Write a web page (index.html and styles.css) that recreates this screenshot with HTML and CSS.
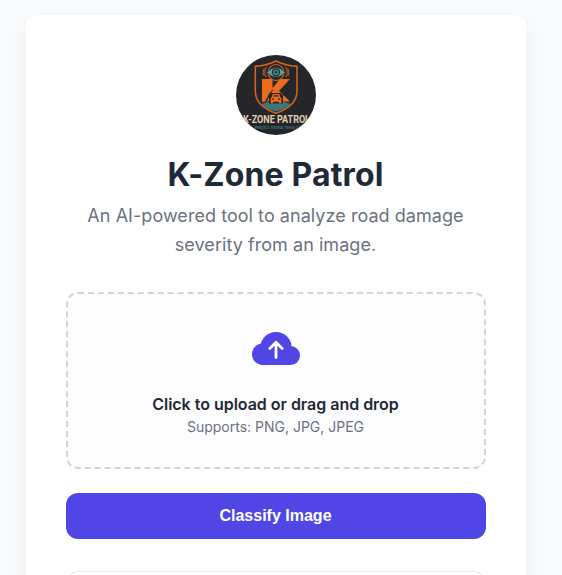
FILE: index.html
```html
<!DOCTYPE html>
<html lang="en">
<head>
<meta charset="utf-8">
<title>K-Zone Patrol</title>
<link rel="stylesheet" href="styles.css">
</head>
<body>
<main class="card">
  <header class="header">
    <svg class="logo" viewBox="0 0 80 80" role="img">
      <rect width="80" height="80" fill="#25262a"/>
      <path class="shield" d="M40 6Q31 10.5 19.3 11.4V36Q19.3 51 40 58.2Q61 51 61 36V11.4Q49 10.5 40 6Z"/>
      <path d="M25 49Q40 43 55 49Q50 54 40 56.5Q30 54 25 49Z" fill="#3f7678"/>
      <path class="letter" d="M26 24H36.5V33L44 24H54L43 36L54 46.5H47L41 39H37L34.5 42L33.5 46L26 47Z"/>
      <path d="M30.5 46.5L36.5 36L37 34L33 39L29 46.5Z" fill="#25262a"/>
      <path d="M33 40.5L35.5 38H44.5L47 40.5V48.5H33Z" fill="#25262a"/>
      <path class="letter" d="M35.7 42L36.8 39H43.2L44.3 42L45.3 43.2V48.3H43V46.8H37V48.3H34.7V43.2Z"/>
      <path d="M37.2 41.6L37.8 40.2H42.2L42.8 41.6ZM36 43.6H38V44.8H36ZM42 43.6H44V44.8H42Z" fill="#25262a"/>
      <circle cx="40" cy="17.5" r="8" fill="#25262a" stroke="#d4621b" stroke-width="1.1"/>
      <path d="M30.5 17.5Q40 7.5 49.5 17.5Q40 27 30.5 17.5Z" fill="#5d9b9d" stroke="#25262a" stroke-width=".6"/>
      <circle cx="40" cy="17.3" r="3.5" fill="#4b8589" stroke="#202d32" stroke-width="1.3"/>
      <circle cx="40" cy="17.3" r="1.2" fill="#202d32"/>
      <path class="waves" d="M30.5 12Q27 17.5 30.5 22M28.2 13.5Q26 17.5 28.2 21M49.5 12Q53 17.5 49.5 22M51.8 13.5Q54 17.5 51.8 21"/>
      <text class="logo-name" x="7" y="68" textLength="67" lengthAdjust="spacingAndGlyphs">K-ZONE PATROL</text>
      <text class="logo-tag" x="19" y="73.6" textLength="50" lengthAdjust="spacingAndGlyphs">PREDICT. PATROL THE K-ZONE</text>
    </svg>
    <h1 class="title">K-Zone Patrol</h1>
    <p class="subtitle">An AI-powered tool to analyze road damage severity from an image.</p>
  </header>
  <section class="dropzone">
    <svg class="cloud" viewBox="0 0 48 33">
      <g fill="#4f46e5">
        <circle cx="10.8" cy="22.2" r="10.8"/>
        <circle cx="24" cy="15.6" r="15.6"/>
        <circle cx="38.5" cy="23.5" r="9.5"/>
        <rect x="10.8" y="15" width="27.7" height="18"/>
      </g>
      <path class="arrow" d="M24 25.5V11M17.8 16.4L24 10.2L30.2 16.4"/>
    </svg>
    <p class="prompt">Click to upload or drag and drop</p>
    <p class="formats">Supports: PNG, JPG, JPEG</p>
  </section>
  <button class="classify" type="button">Classify Image</button>
  <section class="result"></section>
</main>
</body>
</html>
```
FILE: styles.css
```css
* { box-sizing: border-box; }
body {
  margin: 0;
  padding: 15px 36px 0 26px;
  height: 575px;
  overflow: hidden;
  background: #f9fafb;
  font-family: Inter, sans-serif;
}
.card {
  width: 500px;
  height: 560px;
  padding: 40px 40px 0;
  border-radius: 12px 12px 0 0;
  background: #fff;
  box-shadow: 0 10px 25px rgba(0, 0, 0, .05);
}
.header { text-align: center; }
.logo {
  display: block;
  width: 80px;
  height: 80px;
  margin: 0 auto;
  border-radius: 50%;
}
.shield { fill: none; stroke: #d4621b; stroke-width: 1.6; }
.letter { fill: #ed6b1c; }
.waves { fill: none; stroke: #d4621b; stroke-width: 1; }
.logo-name { font: 700 10.5px Roboto, sans-serif; fill: #e0ceb0; }
.logo-tag { font: 700 4px Roboto, sans-serif; fill: #3f7678; }
.title {
  margin: 20px 0 0;
  padding-right: 1px;
  font-size: 32px;
  letter-spacing: .15px;
  line-height: 40px;
  font-weight: 700;
  color: #1f2937;
}
.subtitle {
  margin: 6px 0 0;
  padding-right: 1px;
  font-size: 18px;
  letter-spacing: .05px;
  line-height: 29px;
  color: #6b7280;
}
.dropzone {
  display: flex;
  flex-direction: column;
  align-items: center;
  height: 177px;
  margin-top: 33px;
  padding-top: 38px;
  border: 2px dashed #d1d5db;
  border-radius: 12px;
  background: #fdfcff;
}
.cloud { width: 48px; height: 33px; }
.arrow {
  fill: none;
  stroke: #fff;
  stroke-width: 2.8;
  stroke-linecap: round;
  stroke-linejoin: round;
}
.prompt {
  margin: 27px 0 0;
  padding-right: 1px;
  font-size: 16px;
  letter-spacing: -.02px;
  line-height: 24px;
  font-weight: 600;
  color: #1f2937;
}
.formats {
  margin: 0;
  padding-right: 1px;
  font-size: 14px;
  line-height: 22px;
  color: #6b7280;
}
.classify {
  display: block;
  width: 100%;
  height: 46px;
  margin-top: 24px;
  padding: 0 7px 0 6px;
  border: 0;
  border-radius: 12px;
  background: #4f46e5;
  color: #fff;
  font: 700 16px "Liberation Sans", sans-serif;
}
.result {
  height: 4px;
  margin-top: 32px;
  overflow: hidden;
}
.result::before {
  content: "";
  display: block;
  height: 60px;
  border: 1px solid #e5e7eb;
  border-radius: 12px;
  background: #fdfcff;
}
```
